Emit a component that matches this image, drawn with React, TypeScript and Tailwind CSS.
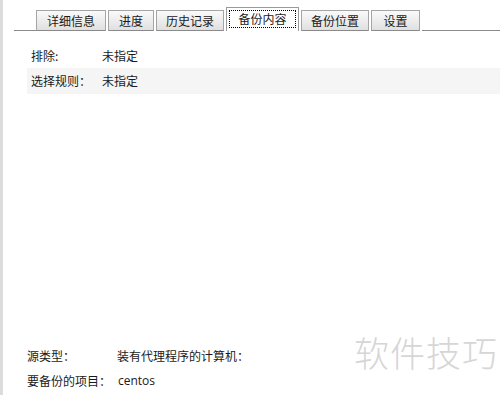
const tabs = ["详细信息", "进度", "历史记录", "备份内容", "备份位置", "设置"];
const widths = ["w-[70px]", "w-[46px]", "w-[68px]", "w-[73px]", "w-[68px]", "w-[49px]"];

const font = "font-['Microsoft_YaHei','Noto_Sans_CJK_SC',sans-serif]";

export default function App() {
  return (
    <div className={`w-[500px] h-[395px] bg-white flex overflow-hidden text-[12px] text-[#1a1a1a] ${font}`}>
      <div className="w-[3px] h-full bg-[#dcdcdc] shrink-0" />
      <div className="flex-1 flex flex-col relative">
        <div className="flex items-end h-[31px] pl-[11px] pt-[7px]">
          <div className="w-[22px] h-full border-b border-[#8a8a8a]" />
          {tabs.map((t, i) =>
            i === 3 ? (
              <div
                key={t}
                className={`${widths[i]} h-[24px] mr-[2px] border border-b-0 border-[#9a9a9a] bg-white px-[2px] pt-[2px] pb-[3px]`}
              >
                <div className="h-full border border-dotted border-black flex items-center justify-center leading-none">
                  {t}
                </div>
              </div>
            ) : (
              <div
                key={t}
                className={`${widths[i]} h-[21px] mr-[2px] border border-[#a5a5a5] border-b-[#8a8a8a] bg-gradient-to-b from-[#fafafa] to-[#e0e0e0] flex items-center justify-center leading-none`}
              >
                {t}
              </div>
            )
          )}
          <div className="flex-1 h-full border-b border-[#8a8a8a]" />
        </div>

        <div className="flex flex-col mt-[12px] pl-[24px]">
          <div className="h-[25px] flex items-center pl-[4px]">
            <span className="w-[71px]">排除:</span>
            <span>未指定</span>
          </div>
          <div className="h-[26px] flex items-center pl-[4px] bg-[#f5f5f5]">
            <span className="w-[71px]">选择规则：</span>
            <span>未指定</span>
          </div>
        </div>

        <div className="flex-1" />

        <div className="flex flex-col pl-[24px] pb-[2px]">
          <div className="h-[25px] flex items-center">
            <span className="w-[90px]">源类型：</span>
            <span>装有代理程序的计算机：</span>
          </div>
          <div className="h-[25px] flex items-center">
            <span className="w-[91px]">要备份的项目：</span>
            <span className="font-['Segoe_UI','Open_Sans',sans-serif]">centos</span>
          </div>
        </div>

        <div className="absolute left-[351px] top-[334px] text-[35px] leading-none text-[#d6d6d6] tracking-[1px] font-['Noto_Sans_CJK_SC',sans-serif] font-light">
          软件技巧
        </div>
      </div>
    </div>
  );
}
